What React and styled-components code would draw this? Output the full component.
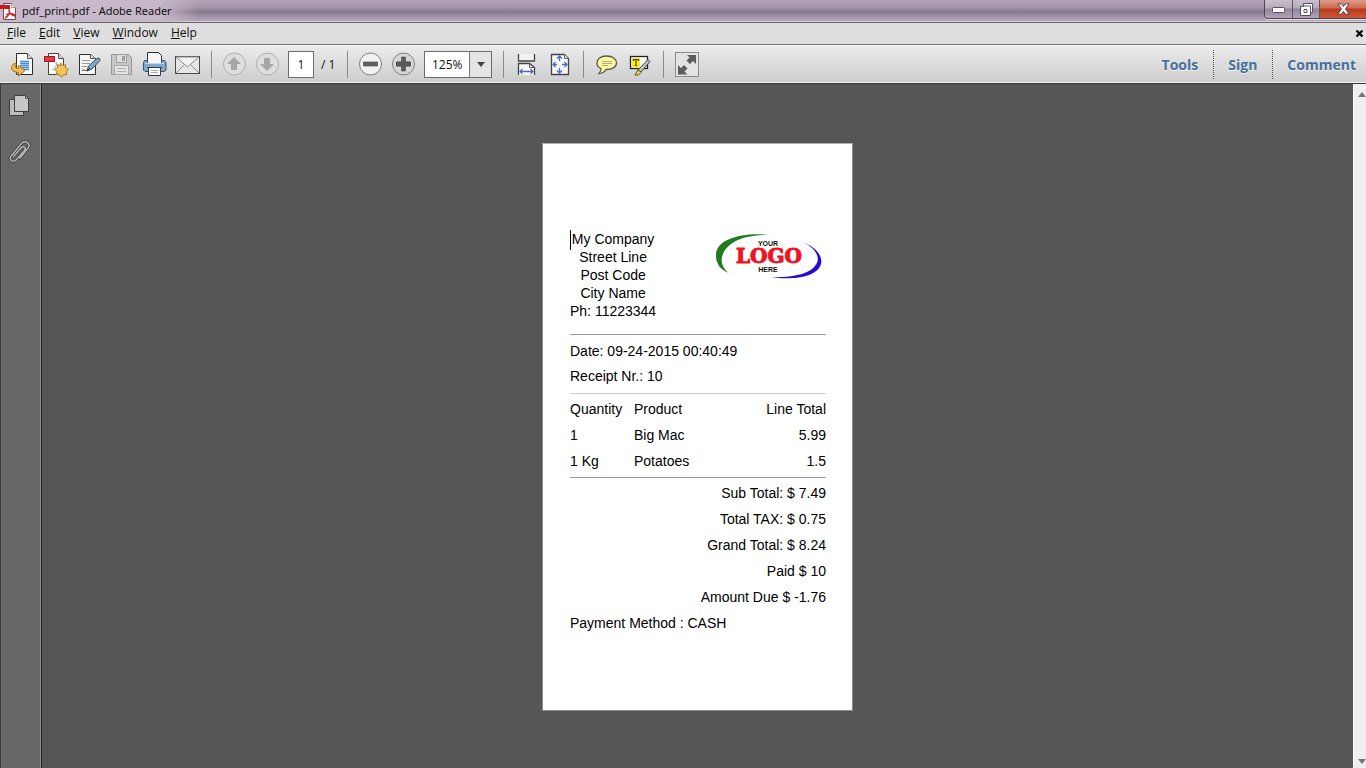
import React from "react";
import styled, { createGlobalStyle } from "styled-components";

const GlobalStyle = createGlobalStyle`
  * { box-sizing: border-box; }
  html, body { margin: 0; padding: 0; }
  body { font-family: "Open Sans", "Noto Sans", sans-serif; font-size: 12px; color: #111; }
  button, input, select { font: inherit; color: inherit; margin: 0; }
`;

const Window = styled.div`
  display: flex;
  flex-direction: column;
  min-height: 100vh;
  background: #565656;
`;

const TitleBar = styled.header`
  display: flex;
  align-items: flex-start;
  height: 23px;
  border-bottom: 1px solid #6b6570;
  box-shadow: inset 0 -1px 0 #d8cfdb;
  background: linear-gradient(180deg, #b4a3b8 0, #a595a9 7px, #84788a 12px, #a594a9 17px, #b9a9bc 22px);
`;

const TitleLabel = styled.div`
  display: flex;
  align-items: center;
  gap: 5px;
  height: 22px;
  padding-right: 28px;
  background: linear-gradient(90deg, #c9b9cc 0, #c5b6c8 80%, rgba(197, 182, 200, 0) 100%);
`;

const TitleText = styled.h1`
  margin: 0;
  font-family: "Noto Sans", "Open Sans", sans-serif;
  font-size: 11px;
  font-weight: 400;
  line-height: 22px;
  white-space: nowrap;
`;

const WindowButtons = styled.div`
  display: flex;
  margin-left: auto;
  height: 19px;
  border: 1px solid #4c4552;
  border-top: 0;
  border-right: 0;
  border-radius: 0 0 0 4px;
  box-shadow: 0 1px 0 #e3dbe6;
  overflow: hidden;
`;

const WindowButton = styled.button`
  display: flex;
  align-items: center;
  justify-content: center;
  width: ${(p) => (p.$close ? 47 : 27)}px;
  height: 18px;
  padding: 0;
  border: 0;
  border-left: ${(p) => (p.$first ? 0 : 1)}px solid #5d5462;
  background: ${(p) =>
    p.$close
      ? "linear-gradient(180deg, #dc9a88 0, #cf6a50 8px, #b93a1c 9px, #cf5638 18px)"
      : "linear-gradient(180deg, #c9bfcc 0, #b5a9b9 8px, #92879a 9px, #b0a3b4 18px)"};
`;

const MenuBar = styled.nav`
  display: flex;
  align-items: flex-start;
  height: 21px;
  padding: 0 2px 0 7px;
  background: #dedede;
`;

const MenuItem = styled.button`
  padding: 0;
  margin-right: 13px;
  border: 0;
  background: none;
  font-size: 12px;
  line-height: 19px;
  &::first-letter { text-decoration: underline; }
`;

const CloseDocument = styled.button`
  display: flex;
  align-self: center;
  margin-left: auto;
  padding: 0;
  border: 0;
  background: none;
`;

const Toolbar = styled.div`
  display: flex;
  align-items: center;
  height: 40px;
  padding-left: 6px;
  border-top: 1px solid #707070;
  border-bottom: 1px solid #3e3e3e;
  box-shadow: inset 0 1px 0 #f8f8f8, inset 0 -1px 0 #f2f2f2;
  background: linear-gradient(180deg, #ececec, #cdcdcd);
`;

const ToolButton = styled.button`
  display: flex;
  align-items: center;
  justify-content: center;
  width: 33px;
  height: 32px;
  padding: 0;
  border: 0;
  background: none;
`;

const Separator = styled.span`
  width: 1px;
  height: 27px;
  margin: 0 6px 0 7px;
  background: #8a8a8a;
`;

const PageInput = styled.input`
  width: 26px;
  height: 27px;
  margin-left: 4px;
  padding: 0;
  border: 1px solid #6d6d6d;
  background: #fff;
  text-align: center;
`;

const PageTotal = styled.span`
  width: 26px;
  padding-left: 7px;
  white-space: nowrap;
`;

const ZoomBox = styled.div`
  position: relative;
  display: flex;
  width: 68px;
  height: 27px;
  margin: 0 4px;
`;

const ZoomSelect = styled.select`
  appearance: none;
  width: 100%;
  height: 27px;
  padding: 0 0 0 7px;
  border: 1px solid #6d6d6d;
  border-radius: 0;
  background: linear-gradient(90deg, #fff 44px, #777 44px, #777 45px, #e4e4e4 45px);
`;

const ZoomArrow = styled.svg`
  position: absolute;
  right: 7px;
  top: 11px;
  pointer-events: none;
`;

const Panes = styled.div`
  display: flex;
  margin-left: auto;
  padding-right: 10px;
`;

const PaneButton = styled.button`
  height: 29px;
  padding: 0;
  border: 0;
  background: none;
  color: #476f9d;
  font-size: 14px;
  font-weight: 700;
  text-shadow: 0 1px 0 #f4f4f4;
  & + & {
    margin-left: 15px;
    padding-left: 14px;
    border-left: 1px dotted #555;
  }
`;

const Workspace = styled.div`
  display: flex;
  flex: 1;
`;

const Rail = styled.aside`
  display: flex;
  flex-direction: column;
  align-items: center;
  gap: 21px;
  width: 42px;
  padding: 9px 4px 0 0;
  border-left: 1px solid #3c3c3c;
  border-right: 1px solid #222;
  box-shadow: inset -1px 0 0 #8d8d8d;
  background: #676767;
`;

const RailButton = styled.button`
  display: flex;
  padding: 0;
  border: 0;
  background: none;
`;

const Canvas = styled.main`
  display: flex;
  flex: 1;
  justify-content: center;
  align-items: flex-start;
  padding: 59px 0 48px;
  background: #565656;
`;

const Paper = styled.article`
  width: 311px;
  min-height: 568px;
  padding: 86px 26px 70px 27px;
  border: 1px solid #8a8a8a;
  border-top-color: #b0b0b0;
  background: #fff;
  color: #000;
  font-family: "Liberation Sans", Arial, sans-serif;
  font-size: 14px;
`;

const ReceiptHead = styled.div`
  display: flex;
  justify-content: space-between;
  padding-bottom: 14px;
`;

const Address = styled.address`
  position: relative;
  font-style: normal;
  line-height: 18px;
  text-align: center;
`;

const Caret = styled.span`
  position: absolute;
  left: 0;
  top: 0;
  width: 1px;
  height: 20px;
  background: #000;
`;

const Details = styled.section`
  padding: 4px 0;
  border-top: 1px solid #999;
  border-bottom: 1px solid #ccc;
`;

const DetailLine = styled.p`
  margin: 0;
  line-height: 25px;
`;

const Items = styled.table`
  width: 100%;
  margin: 2px 0 3px;
  border-collapse: collapse;
  line-height: 26px;
`;

const Cell = styled.td`
  width: ${(p) => p.$width || "auto"};
  padding: 0;
  font-weight: 400;
  text-align: ${(p) => (p.$end ? "right" : "left")};
  white-space: nowrap;
`;

const Totals = styled.section`
  padding-top: 2px;
  border-top: 1px solid #999;
`;

const TotalLine = styled.p`
  margin: 0;
  line-height: 26px;
  text-align: ${(p) => (p.$start ? "left" : "right")};
`;

const ScrollTrack = styled.div`
  display: flex;
  flex-direction: column;
  justify-content: space-between;
  align-items: flex-end;
  width: 13px;
  padding: 8px 0 4px;
  border-left: 1px solid #fff;
  background: #efefef;
`;

const Icon = ({ size = 27, children }) => (
  <svg width={size} height={size} viewBox={`0 0 ${size} ${size}`} fill="none" aria-hidden="true">
    {children}
  </svg>
);

const AdobeIcon = () => (
  <svg width="17" height="20" viewBox="0 0 17 20" fill="none" aria-hidden="true">
    <path d="M3.5 2.5h8l4 4v12h-12z" fill="#fff" stroke="#8d4045" />
    <path d="M11.5 2.5v4h4" fill="#eee" stroke="#999" />
    <path d="M0 4h10v4H0z" fill="#c61920" />
    <path d="M5 17c4-2 5-6 4-9M9 9c0 3 3 6 6 6M6 14c3-2 6-2 9 0" stroke="#d12127" strokeWidth="1.4" />
  </svg>
);

const MinimizeGlyph = () => (
  <svg width="13" height="7" viewBox="0 0 13 7" aria-hidden="true">
    <rect x="0.5" y="1.5" width="12" height="5" rx="1" fill="#fff" stroke="#555062" />
  </svg>
);

const RestoreGlyph = () => (
  <svg width="13" height="13" viewBox="0 0 13 13" fill="none" aria-hidden="true">
    <path d="M3.500 .5h9v9h-2v3h-10v-9h3z" fill="#fff" stroke="#555062" />
    <path d="M3.500 3h7v7M4 6.500h3v3H4z" stroke="#555062" />
  </svg>
);

const CloseGlyph = () => (
  <svg width="13" height="12" viewBox="0 0 13 12" aria-hidden="true">
    <path d="M1 .8h3.400l2.100 2.700L8.600.8H12L8.500 5.900l3.600 5.300H8.600L6.500 8.400l-2.100 2.800H.9l3.600-5.300z" fill="#fff" stroke="#5c4350" />
  </svg>
);

const CloseDocGlyph = () => (
  <svg width="9" height="9" viewBox="0 0 9 9" aria-hidden="true">
    <path d="M1.500 1.500l6 6M7.500 1.500l-6 6" stroke="#000" strokeWidth="2.200" />
  </svg>
);

const ExportIcon = () => (
  <Icon>
    <path d="M7.500 2.500h11l5 5v16h-16z" fill="#fbfbfb" stroke="#2b2b2b" strokeLinejoin="round" />
    <path d="M18.500 2.500v5h5" fill="#ddd" stroke="#555" />
    <path d="M11 10.500h9M11 12.500h9M11 14.500h9M11 16.500h9M13 18.500h7" stroke="#4c8cd4" strokeWidth="1.500" />
    <path d="M5 12.500c-4 3.500-3.500 8.500 4.500 9v3.500l6.500-5.500-6.500-5v3c-3.500 0-4-2-2-4.500z" fill="#f2bd4e" stroke="#a36b12" strokeLinejoin="round" />
  </Icon>
);

const CreateIcon = () => (
  <Icon>
    <path d="M6.500 2.500h10l5 5v16h-15z" fill="#fbfbfb" stroke="#444" strokeLinejoin="round" />
    <path d="M16.500 2.500v5h5" fill="#ddd" stroke="#555" />
    <path d="M10 19c4-2 5-5 4-8M14 12c1 3 3 4 6 4" stroke="#aaa" />
    <rect x="2.500" y="5.500" width="10" height="5" fill="#e33b42" stroke="#a3161d" />
    <path d="M18.500 12l2 2.500 3-.8v3l3 1.800-2.500 2 .8 3-3.200.2-2.100 2.600-2-2.600-3.200-.2.700-3-2.400-2 2.900-1.800v-3l3 .8z" fill="#f4c35c" stroke="#b27a1c" strokeLinejoin="round" />
  </Icon>
);

const EditIcon = () => (
  <Icon>
    <path d="M4.500 3.500h11l5 4v16h-16z" fill="#f5f5f5" stroke="#2e2e2e" strokeLinejoin="round" />
    <path d="M15.500 3.500v4h5" fill="#ddd" stroke="#555" />
    <path d="M7 9.500h8M7 12.500h8M7 15.500h5" stroke="#999" />
    <path d="M7 20c2-3 3 1 5-1" stroke="#333" />
    <path d="M12 20l1.500-5L22 7.500c1-1 4 0 3 2L17 18z" fill="#88a7c4" stroke="#344c63" strokeLinejoin="round" />
    <path d="M12 20l3-3" stroke="#222" />
  </Icon>
);

const SaveIcon = () => (
  <Icon>
    <path d="M3.500 3.500h17l3 3v17h-20z" fill="#c6c6c6" stroke="#979797" strokeLinejoin="round" />
    <path d="M8.500 3.500h10v8h-10z" fill="#dedede" stroke="#a0a0a0" />
    <path d="M14.500 5.500h2v4h-2z" fill="#aaa" stroke="#999" />
    <path d="M6.500 14.500h14v9h-14z" fill="#e4e4e4" stroke="#a6a6a6" />
    <path d="M9 17.500h9M9 20.500h9" stroke="#b0b0b0" />
  </Icon>
);

const PrintIcon = () => (
  <Icon>
    <path d="M6.500 1.500h11l3 3v8h-14z" fill="#f6f6f6" stroke="#333" strokeLinejoin="round" />
    <path d="M3.500 9.500h3v3h14v-3h3l1.500 2v7.500l-2 1.500h-19L2.500 19v-7.500z" fill="#82a9cc" stroke="#38536f" strokeLinejoin="round" />
    <path d="M4 12.500h19" stroke="#bfd8ec" />
    <path d="M6 16.500h15" stroke="#26384a" />
    <path d="M7.500 16.500h12v8h-12z" fill="#fff" stroke="#3a3a3a" />
    <path d="M10 19.500h7M10 21.500h7" stroke="#aaa" />
  </Icon>
);

const MailIcon = () => (
  <Icon>
    <rect x="1.500" y="5.500" width="24" height="17" fill="#e6e6e6" stroke="#4a4a4a" />
    <path d="M2 22l9-9M25 22l-9-9" stroke="#909090" />
    <path d="M2 6l11.500 10L25 6z" fill="#f1f1f1" stroke="#8b8b8b" />
  </Icon>
);

const ArrowIcon = ({ down }) => (
  <Icon>
    <circle cx="13.500" cy="13" r="11" fill="#dedede" stroke="#adadad" />
    <path
      d={down ? "M10 7h6v6h4l-7 7-7-7h4z" : "M10 19h6v-6h4l-7-7-7 7h4z"}
      fill="#a6a6a6"
    />
  </Icon>
);

const SignIcon = ({ plus }) => (
  <Icon>
    <circle cx="13.500" cy="13" r="11" fill={plus ? "#d6d6d6" : "#f1f1f1"} stroke="#808080" />
    <path d="M6.500 11h14v4h-14z" fill="#606060" stroke="#484848" strokeWidth=".6" />
    {plus && <path d="M11.500 6h4v5h5v4h-5v5h-4v-5h-5v-4h5z" fill="#5b5b5b" stroke="#484848" strokeWidth=".6" />}
  </Icon>
);

const FitWidthIcon = () => (
  <Icon>
    <path d="M5.500 3v7h16V3" fill="#f1f1f1" stroke="#444" strokeWidth="1.300" />
    <path d="M5.500 24V12.500h11l5 4V24" fill="#fafafa" stroke="#444" strokeWidth="1.300" />
    <path d="M16.500 12.500v4h5" stroke="#666" />
    <path d="M7 20.500h13M9.500 18L7 20.500 9.500 23M17.500 18l2.500 2.500-2.500 2.500" stroke="#4b6fb5" strokeWidth="1.300" />
  </Icon>
);

const FitPageIcon = () => (
  <Icon>
    <path d="M5.500 3.500h13l4 4v16h-17z" fill="#f7f8fb" stroke="#444" strokeWidth="1.300" />
    <path d="M18.500 3.500v4h4" fill="#ddd" stroke="#666" />
    <path d="M13.500 5v5M13.500 17v5M7 13.500h4M16 13.500h5M11 7.500L13.500 5 16 7.500M11 19.500l2.500 2.500 2.500-2.500M9.500 11L7 13.500 9.500 16M18.500 11l2.500 2.500-2.500 2.500" stroke="#4b6fb5" strokeWidth="1.300" />
  </Icon>
);

const CommentIcon = () => (
  <Icon>
    <path d="M13.500 5C7.500 5 4 8 4 12c0 2.500 1.500 4.500 4 5.500 0 2-.5 3.500-2 5 3 0 5.500-1.500 7-4 6 .3 10.500-2.500 10.500-6.500S19.500 5 13.500 5z" fill="#fbf7a4" stroke="#5b5a46" strokeWidth="1.300" />
    <path d="M9 10.500h10M9 12.500h10M9 14.500h6" stroke="#b5ae6a" />
  </Icon>
);

const HighlightIcon = () => (
  <Icon>
    <rect x="4.500" y="5.500" width="17" height="12" fill="#fdfdfd" stroke="#222" strokeWidth="1.300" />
    <rect x="6" y="7" width="8" height="9" fill="#fff200" />
    <path d="M7.500 10V8.500h5V10M10 8.500v6M8.800 14.500h2.400" stroke="#443e00" strokeWidth="1.200" />
    <path d="M12 19L22 8.500l2 2L15 21z" fill="#c2c2c2" stroke="#484848" />
    <path d="M12 18.500l3 3-2.500 2.500H9z" fill="#f1d54c" stroke="#5d511a" />
  </Icon>
);

const FullScreenIcon = () => (
  <Icon>
    <rect x="2.500" y="1.500" width="23" height="24" fill="#e3e3e3" stroke="#8a8a8a" />
    <path d="M14 4h9v9l-3-3-3 3-3.500-3.500 3-3z" fill="#5d5d5d" />
    <path d="M5 14l3 3 3-3 3.500 3.500-3 3 3 3H5z" fill="#5d5d5d" />
  </Icon>
);

const PagesIcon = () => (
  <Icon size={24}>
    <path d="M2.500 6.500h14v16h-14z" fill="#bdbdbd" stroke="#3f3f3f" />
    <path d="M7.500 2.500h11l3 3v13h-14z" fill="#c7c7c7" stroke="#3f3f3f" />
    <path d="M18.500 2.500v3h3" stroke="#555" />
  </Icon>
);

const ClipIcon = () => (
  <Icon size={27}>
    <path d="M7.500 18.500l8-9c2-2 5 0 3 3l-8 9c-4 4-8 0-5-4L16 5c4-3 9 1 6 5l-8 10" stroke="#3f3f3f" strokeWidth="3" strokeLinecap="round" />
    <path d="M7.500 18.500l8-9c2-2 5 0 3 3l-8 9c-4 4-8 0-5-4L16 5c4-3 9 1 6 5l-8 10" stroke="#b5b5b5" strokeWidth="1.500" strokeLinecap="round" />
  </Icon>
);

const CompanyLogo = () => (
  <svg width="112" height="50" viewBox="0 0 112 50" role="img" aria-label="Your logo here">
    <path d="M56 5C29 2 1 9 2 26c0 8 5 14 13 17C4 35 6 22 17 14 27 7 40 5 56 5z" fill="#217a1d" />
    <path d="M91 13c20 9 22 25 4 32-10 4-27 4-39 2 16 1 35-2 42-8 11-9 5-19-7-26z" fill="#2410cc" />
    <text x="54" y="16" textAnchor="middle" fontFamily="Liberation Sans" fontSize="7" fontWeight="700" fill="#111">YOUR</text>
    <text x="55" y="33" textAnchor="middle" fontFamily="DejaVu Serif" fontSize="20" fontWeight="700" fill="#ee1325" stroke="#ee1325">LOGO</text>
    <text x="54" y="42" textAnchor="middle" fontFamily="Liberation Sans" fontSize="7" fontWeight="700" fill="#111">HERE</text>
  </svg>
);

const ScrollArrow = ({ down }) => (
  <svg width="8" height="5" viewBox="0 0 8 5" aria-hidden="true">
    <path d={down ? "M0 0h8L4 5z" : "M0 5h8L4 0z"} fill="#777" />
  </svg>
);

const fileTools = [
  ["Export", ExportIcon],
  ["Create PDF", CreateIcon],
  ["Edit", EditIcon],
  ["Save", SaveIcon],
  ["Print", PrintIcon],
  ["Email", MailIcon],
];

const items = [
  ["1", "Big Mac", "5.99"],
  ["1 Kg", "Potatoes", "1.5"],
];

const totals = [
  "Sub Total: $ 7.49",
  "Total TAX: $ 0.75",
  "Grand Total: $ 8.24",
  "Paid $ 10",
  "Amount Due $ -1.76",
];

export default function App() {
  return (
    <Window>
      <GlobalStyle />
      <TitleBar>
        <TitleLabel>
          <AdobeIcon />
          <TitleText>pdf_print.pdf - Adobe Reader</TitleText>
        </TitleLabel>
        <WindowButtons>
          <WindowButton $first aria-label="Minimize"><MinimizeGlyph /></WindowButton>
          <WindowButton aria-label="Restore"><RestoreGlyph /></WindowButton>
          <WindowButton $close aria-label="Close"><CloseGlyph /></WindowButton>
        </WindowButtons>
      </TitleBar>
      <MenuBar>
        {["File", "Edit", "View", "Window", "Help"].map((name) => (
          <MenuItem key={name}>{name}</MenuItem>
        ))}
        <CloseDocument aria-label="Close document"><CloseDocGlyph /></CloseDocument>
      </MenuBar>
      <Toolbar>
        {fileTools.map(([name, Glyph]) => (
          <ToolButton key={name} aria-label={name}><Glyph /></ToolButton>
        ))}
        <Separator />
        <ToolButton aria-label="Previous page"><ArrowIcon /></ToolButton>
        <ToolButton aria-label="Next page"><ArrowIcon down /></ToolButton>
        <PageInput aria-label="Page number" defaultValue="1" />
        <PageTotal>/ 1</PageTotal>
        <Separator />
        <ToolButton aria-label="Zoom out"><SignIcon /></ToolButton>
        <ToolButton aria-label="Zoom in"><SignIcon plus /></ToolButton>
        <ZoomBox>
          <ZoomSelect aria-label="Zoom level" defaultValue="125%">
            <option>125%</option>
          </ZoomSelect>
          <ZoomArrow width="8" height="5" viewBox="0 0 8 5" aria-hidden="true">
            <path d="M0 0h8L4 5z" fill="#444" />
          </ZoomArrow>
        </ZoomBox>
        <Separator />
        <ToolButton aria-label="Fit width"><FitWidthIcon /></ToolButton>
        <ToolButton aria-label="Fit page"><FitPageIcon /></ToolButton>
        <Separator />
        <ToolButton aria-label="Add note"><CommentIcon /></ToolButton>
        <ToolButton aria-label="Highlight text"><HighlightIcon /></ToolButton>
        <Separator />
        <ToolButton aria-label="Full screen"><FullScreenIcon /></ToolButton>
        <Panes>
          <PaneButton>Tools</PaneButton>
          <PaneButton>Sign</PaneButton>
          <PaneButton>Comment</PaneButton>
        </Panes>
      </Toolbar>
      <Workspace>
        <Rail>
          <RailButton aria-label="Page thumbnails"><PagesIcon /></RailButton>
          <RailButton aria-label="Attachments"><ClipIcon /></RailButton>
        </Rail>
        <Canvas>
          <Paper>
            <ReceiptHead>
              <Address>
                <Caret />
                My Company<br />
                Street Line<br />
                Post Code<br />
                City Name<br />
                Ph: 11223344
              </Address>
              <CompanyLogo />
            </ReceiptHead>
            <Details>
              <DetailLine>Date: 09-24-2015 00:40:49</DetailLine>
              <DetailLine>Receipt Nr.: 10</DetailLine>
            </Details>
            <Items>
              <thead>
                <tr>
                  <Cell as="th" scope="col" $width="64px">Quantity</Cell>
                  <Cell as="th" scope="col">Product</Cell>
                  <Cell as="th" scope="col" $end>Line Total</Cell>
                </tr>
              </thead>
              <tbody>
                {items.map(([quantity, product, total]) => (
                  <tr key={product}>
                    <Cell>{quantity}</Cell>
                    <Cell>{product}</Cell>
                    <Cell $end>{total}</Cell>
                  </tr>
                ))}
              </tbody>
            </Items>
            <Totals>
              {totals.map((line) => (
                <TotalLine key={line}>{line}</TotalLine>
              ))}
              <TotalLine $start>Payment Method : CASH</TotalLine>
            </Totals>
          </Paper>
        </Canvas>
        <ScrollTrack>
          <ScrollArrow />
          <ScrollArrow down />
        </ScrollTrack>
      </Workspace>
    </Window>
  );
}
